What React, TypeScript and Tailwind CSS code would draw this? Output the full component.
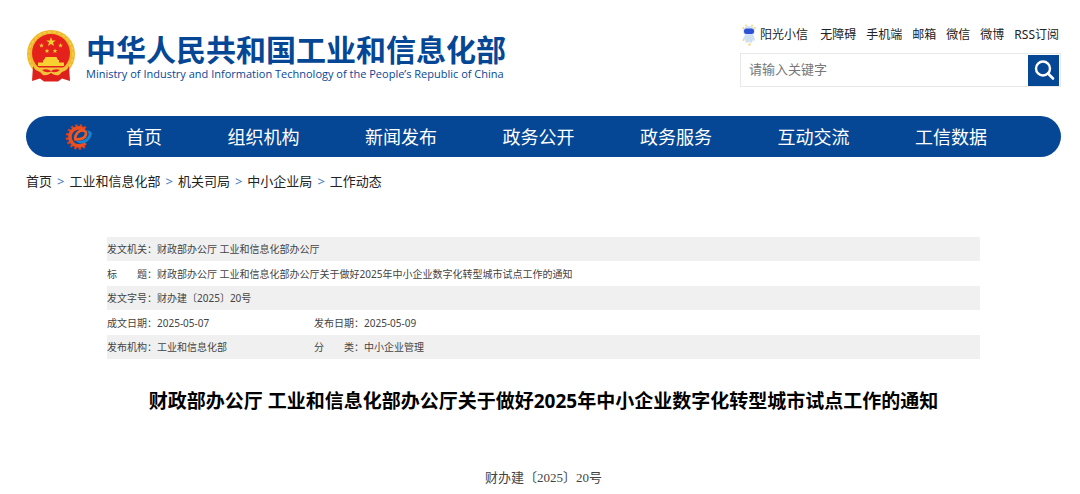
import React from 'react';

const topLinks = ['无障碍', '手机端', '邮箱', '微信', '微博', 'RSS订阅'];

const navItems = ['首页', '组织机构', '新闻发布', '政务公开', '政务服务', '互动交流', '工信数据'];

const crumbs = ['首页', '工业和信息化部', '机关司局', '中小企业局', '工作动态'];

interface Field {
  label: string;
  value: string;
}

const rows: Field[][] = [
  [{ label: '发文机关：', value: '财政部办公厅 工业和信息化部办公厅' }],
  [
    {
      label: '标　　题：',
      value: '财政部办公厅 工业和信息化部办公厅关于做好2025年中小企业数字化转型城市试点工作的通知',
    },
  ],
  [{ label: '发文字号：', value: '财办建〔2025〕20号' }],
  [
    { label: '成文日期：', value: '2025-05-07' },
    { label: '发布日期：', value: '2025-05-09' },
  ],
  [
    { label: '发布机构：', value: '工业和信息化部' },
    { label: '分　　类：', value: '中小企业管理' },
  ],
];

function Emblem() {
  const star = 'M0 -5 L1.2 -1.6 L4.8 -1.5 L2 0.6 L3 4 L0 2 L-3 4 L-2 0.6 L-4.8 -1.5 L-1.2 -1.6 Z';
  return (
    <svg viewBox="0 0 50 54" className="w-[50px] h-[54px] shrink-0" aria-hidden="true">
      <circle cx="25" cy="25" r="24" fill="#f0b92c" />
      <circle cx="25" cy="25" r="22" fill="none" stroke="#f6cc4a" strokeWidth="1.5" strokeDasharray="3 2" />
      <circle cx="25" cy="24" r="19" fill="#e5211c" />
      <g fill="#f8d030">
        <path d={star} transform="translate(25 13)" />
        <path d={star} transform="translate(15.5 16.5) scale(.5)" />
        <path d={star} transform="translate(34.5 16.5) scale(.5)" />
        <path d={star} transform="translate(21 22) scale(.5)" />
        <path d={star} transform="translate(29 22) scale(.5)" />
        <path d="M19.5 28 H30.5 L32 31 H33 V33.5 H38 V37 H12 V33.5 H17 V31 H18 Z" />
      </g>
      <path d="M7 37 Q9 42 13 42 H37 Q41 42 43 37 L44 52 L36 49.5 L32 52.5 H18 L14 49.5 L6 52 Z" fill="#dd201c" />
      <path d="M8 37 L13 38.5 H37 L42 37 Q41 41 36 43 L33 46 Q29 47 25 44 Q21 47 17 46 L14 43 Q9 41 8 37 Z" fill="#f3c33a" />
      <path d="M16 41 Q21 39 25 42 Q29 39 34 41 Q30 44.5 25 42.5 Q20 44.5 16 41 Z" fill="#e5211c" />
    </svg>
  );
}

function GearLogo() {
  return (
    <svg viewBox="0 0 28 28" className="w-7 h-7" aria-hidden="true">
      <path
        d="M20.5 5.5 A11 11 0 1 0 20.5 22.5"
        fill="none"
        stroke="#d8431f"
        strokeWidth="3.5"
        strokeDasharray="2.2 2"
      />
      <path d="M20.5 20 A9 9 0 1 1 19 6.5" fill="none" stroke="#ee4d1d" strokeWidth="3.6" />
      <path d="M9 16 Q19 17.5 21 11.5 Q21.5 7 16.5 7.5 Q11.5 8.5 10 15" fill="none" stroke="#f05a22" strokeWidth="2.8" />
      <path d="M11 18 Q21 18.5 23.5 12.5 Q24 9.5 22 7.5 Q28 8 26.5 12.5 Q23.5 20.5 15.5 20.5 Q13 20 11 18 Z" fill="#1685cf" />
    </svg>
  );
}

function Mascot() {
  return (
    <svg viewBox="0 0 14 22" className="w-3.5 h-[22px]" aria-hidden="true">
      <g fill="#f8d873">
        <circle cx="4" cy="1.5" r="1" />
        <circle cx="10" cy="1.5" r="1" />
        <circle cx="1.2" cy="4" r="1" />
        <circle cx="12.8" cy="4" r="1" />
        <circle cx="1.5" cy="16" r="1" />
        <circle cx="7.5" cy="20.5" r="1.2" />
      </g>
      <path d="M4 10 L1 14 L3 16 L4 19 L7 18 L10 19 L11 16 L13 17 L12 12 L10 10 Z" fill="#cfe0f3" />
      <ellipse cx="7" cy="7" rx="6" ry="5" fill="#d4e1f5" />
      <rect x="2" y="4.5" width="10" height="5.5" rx="2.5" fill="#2d52d3" />
    </svg>
  );
}

function Header() {
  return (
    <header className="flex items-start justify-between">
      <a href="#" className="flex items-center gap-2.5 pt-[5px] text-[#064795]">
        <Emblem />
        <div>
          <div className="text-[30px] leading-9 font-bold whitespace-nowrap">中华人民共和国工业和信息化部</div>
          <div className="text-[11px] leading-3 font-medium whitespace-nowrap font-['Open_Sans','Noto_Sans',sans-serif]">
            Ministry of Industry and Information Technology of the People’s Republic of China
          </div>
        </div>
      </a>

      <div className="w-[321px]">
        <nav className="flex items-center gap-2.5 pl-0.5 pr-0.5 h-[22px] text-xs text-[#222] whitespace-nowrap">
          <a href="#" className="flex items-center gap-1 mr-auto">
            <Mascot />
            阳光小信
          </a>
          {topLinks.map((link) => (
            <a key={link} href="#">
              {link}
            </a>
          ))}
        </nav>
        <form
          className="flex items-center mt-[7px] h-[34px] p-px border border-[#e8e8e8]"
          onSubmit={(e) => e.preventDefault()}
        >
          <input
            type="text"
            aria-label="搜索"
            placeholder="请输入关键字"
            className="flex-1 min-w-0 px-[7px] text-[13px] placeholder:text-[#777] focus:outline-none"
          />
          <button
            type="submit"
            aria-label="提交搜索"
            className="flex items-center justify-center w-[31px] h-[31px] bg-[#064795]"
          >
            <svg viewBox="0 0 22 22" className="w-[22px] h-[22px]" fill="none" stroke="#fff" strokeWidth="2.4">
              <circle cx="10" cy="9.5" r="7" />
              <path d="M15 14.5 L20 19.5" strokeWidth="2.6" strokeLinecap="round" />
            </svg>
          </button>
        </form>
      </div>
    </header>
  );
}

function InfoTable() {
  return (
    <table className="w-full table-fixed text-[10px] leading-4 text-[#444]">
      <colgroup>
        <col className="w-[50px]" />
        <col className="w-[157px]" />
        <col className="w-[50px]" />
        <col />
      </colgroup>
      <tbody>
        {rows.map((fields) => (
          <tr key={fields[0].label} className="h-6 odd:bg-[#f0f0f0] even:h-[25px]">
            {fields.map((field) => (
              <React.Fragment key={field.label}>
                <th scope="row" className="p-0 text-left font-normal whitespace-nowrap">
                  {field.label}
                </th>
                <td className="p-0" colSpan={fields.length === 1 ? 3 : 1}>
                  {field.value}
                </td>
              </React.Fragment>
            ))}
          </tr>
        ))}
      </tbody>
    </table>
  );
}

export default function App() {
  return (
    <div className="bg-white pl-[26px] pr-[19px] pt-6 pb-1 font-['Noto_Sans','Noto_Sans_CJK_SC',sans-serif]">
      <Header />

      <nav className="flex items-center mt-[29px] h-[41px] pl-[39px] pr-[74px] rounded-full bg-[#064795] text-lg text-white whitespace-nowrap">
        <GearLogo />
        <div className="flex flex-1 justify-between ml-[33px]">
          {navItems.map((item) => (
            <a key={item} href="#">
              {item}
            </a>
          ))}
        </div>
      </nav>

      <nav className="flex gap-[5px] mt-3.5 text-[13px] leading-5 text-[#222]" aria-label="当前位置">
        {crumbs.map((crumb, i) => (
          <React.Fragment key={crumb}>
            {i > 0 && <span className="text-[#3b78c4]">&gt;</span>}
            <a href="#">{crumb}</a>
          </React.Fragment>
        ))}
      </nav>

      <main className="pl-[81px] pr-[81px] mt-[46px]">
        <InfoTable />
        <h1 className="mt-7 text-[19px] leading-7 font-bold text-center text-black">
          财政部办公厅 工业和信息化部办公厅关于做好2025年中小企业数字化转型城市试点工作的通知
        </h1>
        <p className="mt-[53px] text-[13px] leading-5 text-center text-[#444] font-['Liberation_Serif','Noto_Sans_CJK_SC',serif]">
          财办建〔2025〕20号
        </p>
      </main>
    </div>
  );
}
